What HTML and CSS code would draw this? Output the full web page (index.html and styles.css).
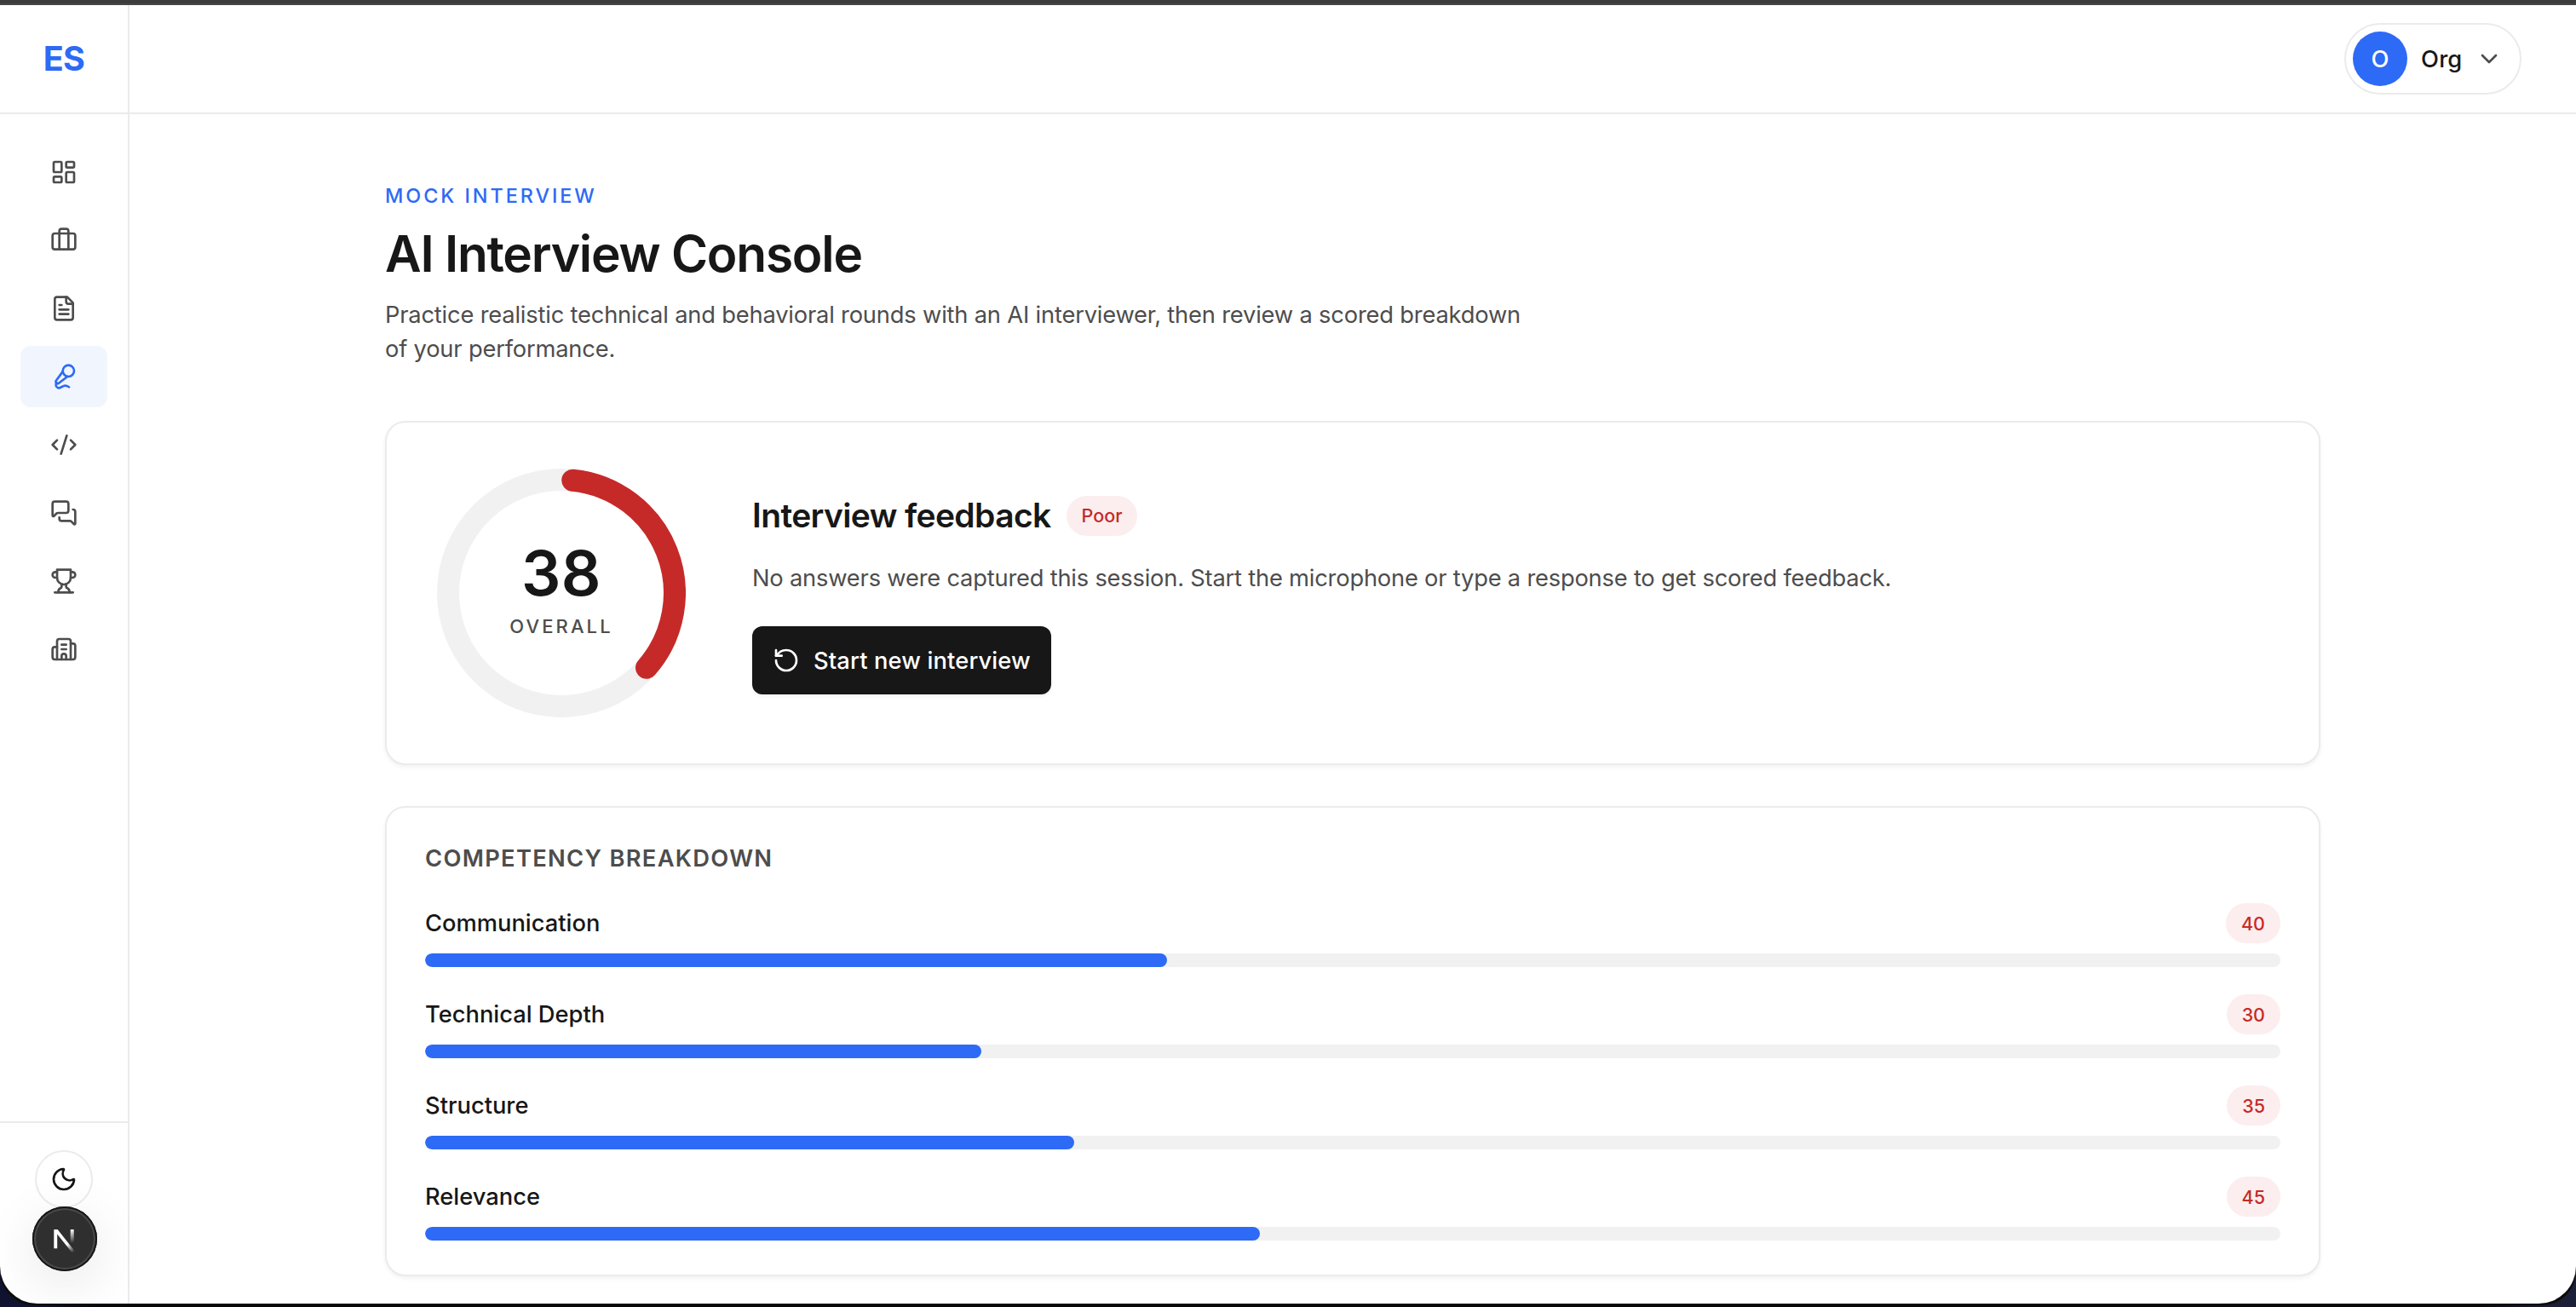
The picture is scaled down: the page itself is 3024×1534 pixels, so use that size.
FILE: index.html
```html
<!DOCTYPE html>
<html lang="en">
<head>
<meta charset="utf-8">
<title>AI Interview Console</title>
<link rel="stylesheet" href="styles.css">
</head>
<body>
<div class="frame">
<div class="app">
  <aside class="sidebar">
    <div class="logo">ES</div>
    <nav class="nav">
      <a class="nav-item"><svg class="icon" viewBox="0 0 24 24"><rect x="3" y="3" width="7" height="9" rx="1"/><rect x="14" y="3" width="7" height="5" rx="1"/><rect x="14" y="12" width="7" height="9" rx="1"/><rect x="3" y="16" width="7" height="5" rx="1"/></svg></a>
      <a class="nav-item"><svg class="icon" viewBox="0 0 24 24"><path d="M16 20V4a2 2 0 0 0-2-2h-4a2 2 0 0 0-2 2v16"/><rect x="2" y="6" width="20" height="14" rx="2"/></svg></a>
      <a class="nav-item"><svg class="icon" viewBox="0 0 24 24"><path d="M15 2H6a2 2 0 0 0-2 2v16a2 2 0 0 0 2 2h12a2 2 0 0 0 2-2V7Z"/><path d="M14 2v4a2 2 0 0 0 2 2h4"/><path d="M10 9H8"/><path d="M16 13H8"/><path d="M16 17H8"/></svg></a>
      <a class="nav-item active"><svg class="icon" viewBox="0 0 24 24"><path d="m11 7.601-5.994 8.19a1 1 0 0 0 .1 1.298l.817.818a1 1 0 0 0 1.314.087L15.09 12"/><path d="M16.5 21.174C15.5 20.5 14.372 20 13 20c-2.058 0-3.928 2.356-6 2-2.072-.356-2.775-3.369-1.5-4.5"/><circle cx="16" cy="7" r="5"/></svg></a>
      <a class="nav-item"><svg class="icon" viewBox="0 0 24 24"><path d="m18 16 4-4-4-4"/><path d="m6 8-4 4 4 4"/><path d="m14.5 4-5 16"/></svg></a>
      <a class="nav-item"><svg class="icon" viewBox="0 0 24 24"><path d="M16 10a2 2 0 0 1-2 2H6.828a2 2 0 0 0-1.414.586l-2.202 2.202A.71.71 0 0 1 2 14.286V4a2 2 0 0 1 2-2h10a2 2 0 0 1 2 2z"/><path d="M20 9a2 2 0 0 1 2 2v10.286a.71.71 0 0 1-1.212.502l-2.202-2.202A2 2 0 0 0 17.172 19H10a2 2 0 0 1-2-2v-1"/></svg></a>
      <a class="nav-item"><svg class="icon" viewBox="0 0 24 24"><path d="M6 9H4.500a2.500 2.500 0 0 1 0-5H6"/><path d="M18 9h1.500a2.500 2.500 0 0 0 0-5H18"/><path d="M4 22h16"/><path d="M10 14.660V17c0 .55-.47.98-.97 1.210C7.850 18.750 7 20.240 7 22"/><path d="M14 14.660V17c0 .55.47.98.97 1.210C16.150 18.750 17 20.240 17 22"/><path d="M18 2H6v7a6 6 0 0 0 12 0V2Z"/></svg></a>
      <a class="nav-item"><svg class="icon" viewBox="0 0 24 24"><path d="M10 12h4"/><path d="M10 8h4"/><path d="M14 21v-3a2 2 0 0 0-4 0v3"/><path d="M6 10H4a2 2 0 0 0-2 2v7a2 2 0 0 0 2 2h16a2 2 0 0 0 2-2V9a2 2 0 0 0-2-2h-2"/><path d="M6 21V5a2 2 0 0 1 2-2h8a2 2 0 0 1 2 2v16"/></svg></a>
    </nav>
    <div class="sidebar-foot">
      <button class="theme"><svg class="icon" viewBox="0 0 24 24"><path d="M20.985 12.486a9 9 0 1 1-9.473-9.472c.405-.022.617.46.402.803a6 6 0 0 0 8.268 8.268c.344-.215.825-.004.803.401"/></svg></button>
    </div>
    <div class="dev-badge">
      <svg viewBox="0 0 40 40">
        <defs>
          <linearGradient id="diag" gradientUnits="userSpaceOnUse" x1="25" y1="26" x2="32" y2="36"><stop stop-color="#fff"/><stop offset="1" stop-color="#fff" stop-opacity="0"/></linearGradient>
          <linearGradient id="stem" x1="0" y1="0" x2="0" y2="1"><stop stop-color="#fff"/><stop offset="1" stop-color="#fff" stop-opacity="0"/></linearGradient>
        </defs>
        <path d="M9.300 31.200V9h4.300L34 34.800 31 36.800 13.200 14.600V31.200Z" fill="url(#diag)"/>
        <rect x="28.700" y="9" width="4" height="16" fill="url(#stem)"/>
      </svg>
    </div>
  </aside>
  <div class="content">
    <header class="topbar">
      <button class="account">
        <span class="avatar">O</span>
        <span class="account-name">Org</span>
        <svg class="icon chevron" viewBox="0 0 24 24"><path d="m6 9 6 6 6-6"/></svg>
      </button>
    </header>
    <main class="main">
      <p class="eyebrow">MOCK INTERVIEW</p>
      <h1 class="title">AI Interview Console</h1>
      <p class="lead">Practice realistic technical and behavioral rounds with an AI interviewer, then review a scored breakdown<br>of your performance.</p>

      <section class="card summary">
        <div class="ring">
          <svg class="ring-svg" viewBox="0 0 292 292">
            <circle class="ring-track" cx="146" cy="146" r="133"/>
            <path class="ring-value" d="M159.200 13.700A133 133 0 0 1 246 233.700"/>
          </svg>
          <div class="ring-label">
            <span class="score">38</span>
            <span class="overall">OVERALL</span>
          </div>
        </div>
        <div class="feedback">
          <div class="feedback-head"><h2 class="feedback-title">Interview feedback</h2><span class="pill">Poor</span></div>
          <p class="feedback-text">No answers were captured this session. Start the microphone or type a response to get scored feedback.</p>
          <button class="restart"><svg class="icon" viewBox="0 0 24 24"><path d="M3 12a9 9 0 1 0 9-9 9.750 9.750 0 0 0-6.740 2.740L3 8"/><path d="M3 3v5h5"/></svg><span>Start new interview</span></button>
        </div>
      </section>

      <section class="card breakdown">
        <h3 class="breakdown-title">COMPETENCY BREAKDOWN</h3>
        <div class="rows">
          <div class="row"><div class="row-head"><span>Communication</span><span class="pill">40</span></div><div class="bar"><div class="fill" style="width:40%"></div></div></div>
          <div class="row"><div class="row-head"><span>Technical Depth</span><span class="pill">30</span></div><div class="bar"><div class="fill" style="width:30%"></div></div></div>
          <div class="row"><div class="row-head"><span>Structure</span><span class="pill">35</span></div><div class="bar"><div class="fill" style="width:35%"></div></div></div>
          <div class="row"><div class="row-head"><span>Relevance</span><span class="pill">45</span></div><div class="bar"><div class="fill" style="width:45%"></div></div></div>
        </div>
      </section>
    </main>
  </div>
</div>
</div>
</body>
</html>
```
FILE: styles.css
```css
* { box-sizing: border-box; }

body {
  margin: 0;
  height: 1534px;
  overflow: hidden;
  background: linear-gradient(90deg, #10132f 0, #10132f 40px, #07060c 110px, #07060c 2910px, #1c1f38 3000px);
  font-family: Inter, "Liberation Sans", sans-serif;
  color: #171717;
}

h1, h2, h3, p { margin: 0; }
button { font: inherit; padding: 0; background: none; border: 0; }

.frame {
  height: 1532px;
  padding-top: 6px;
  background: linear-gradient(#3c3c3c 0, #3c3c3c 4px, #464646 4px, #464646 6px, #0c0c0c 6px);
  border-radius: 0 0 40px 40px;
}

.app {
  display: flex;
  height: 1524px;
  background: #fff;
  border-radius: 0 0 44px 44px;
  overflow: hidden;
}

.icon {
  width: 32px;
  height: 32px;
  flex: none;
  fill: none;
  stroke: currentColor;
  stroke-width: 2;
  stroke-linecap: round;
  stroke-linejoin: round;
}

/* Sidebar */
.sidebar {
  position: relative;
  display: flex;
  flex-direction: column;
  width: 152px;
  flex: none;
  border-right: 2px solid #ebebeb;
}
.logo {
  display: flex;
  align-items: center;
  justify-content: center;
  height: 128px;
  border-bottom: 2px solid #ebebeb;
  color: #2d6af6;
  font-size: 39.5px;
  font-weight: 700;
  letter-spacing: -0.6px;
}
.nav {
  display: flex;
  flex-direction: column;
  gap: 8px;
  flex: 1;
  padding: 32px 24px;
}
.nav-item {
  display: flex;
  align-items: center;
  justify-content: center;
  height: 72px;
  border-radius: 12px;
  color: #4d4d4d;
}
.nav-item.active { background: #f1f6fe; color: #2d6af6; }
.sidebar-foot {
  display: flex;
  justify-content: center;
  height: 214px;
  padding-top: 32px;
  border-top: 2px solid #ebebeb;
}
.theme {
  display: flex;
  align-items: center;
  justify-content: center;
  width: 68px;
  height: 68px;
  border: 2px solid #ebebeb;
  border-radius: 50%;
  color: #171717;
}
.dev-badge {
  position: absolute;
  left: 38px;
  bottom: 38px;
  display: flex;
  align-items: center;
  justify-content: center;
  width: 76px;
  height: 76px;
  border-radius: 50%;
  background: #2f2f2f;
  box-shadow: inset 0 0 0 2px #171717, inset 0 0 0 4px #4a4a4a, 0 16px 64px rgba(0, 0, 0, 0.1);
}
.dev-badge svg { width: 40px; height: 40px; margin-right: 4px; }

/* Top bar */
.content { flex: 1; min-width: 0; }
.topbar {
  display: flex;
  align-items: center;
  justify-content: flex-end;
  height: 128px;
  padding-right: 64px;
  border-bottom: 2px solid #ebebeb;
}
.account {
  display: flex;
  align-items: center;
  width: 208px;
  height: 84px;
  padding-left: 8px;
  border: 2px solid #ebebeb;
  border-radius: 42px;
  font-size: 27.3px;
  font-weight: 500;
  color: #171717;
}
.avatar {
  display: flex;
  align-items: center;
  justify-content: center;
  width: 64px;
  height: 64px;
  border-radius: 50%;
  background: #2d6af6;
  color: #fff;
}
.account-name { margin-left: 16px; letter-spacing: 0.2px; }
.chevron { margin: 0 20px 0 auto; color: #4d4d4d; }

/* Page */
.main { width: 2272px; margin-left: 300px; padding-top: 80px; }
.eyebrow {
  color: #2d6af6;
  font-size: 23.4px;
  font-weight: 500;
  line-height: 32px;
  letter-spacing: 2.95px;
}
.title {
  margin: 16px 0 0;
  font-size: 58.6px;
  font-weight: 600;
  line-height: 72px;
  letter-spacing: -1.24px;
}
.lead {
  margin: 16px 0 64px;
  color: #4d4d4d;
  font-size: 27.3px;
  line-height: 40px;
  letter-spacing: -0.19px;
}

.card {
  border: 2px solid #ebebeb;
  border-radius: 24px;
  background: #fff;
  box-shadow: 0 2px 4px rgba(0, 0, 0, 0.04), 0 4px 8px rgba(0, 0, 0, 0.02);
}

.summary {
  display: flex;
  align-items: center;
  gap: 78px;
  height: 404px;
  padding-left: 59px;
}
.ring { display: grid; width: 292px; height: 292px; }
.ring-svg, .ring-label { grid-area: 1 / 1; }
.ring-track, .ring-value { fill: none; stroke-width: 26; }
.ring-track { stroke: #f1f1f1; }
.ring-value { stroke: #c52a29; stroke-linecap: round; }
.ring-label {
  display: flex;
  flex-direction: column;
  align-items: center;
  padding-top: 87px;
}
.score { font-size: 73px; font-weight: 600; line-height: 72px; letter-spacing: 0.5px; }
.overall {
  margin-top: 14px;
  color: #4d4d4d;
  font-size: 22px;
  font-weight: 500;
  line-height: 24px;
  letter-spacing: 3.1px;
}

.feedback { display: flex; flex-direction: column; align-items: flex-start; }
.feedback-head { display: flex; align-items: center; gap: 18px; }
.feedback-title { font-size: 39px; font-weight: 600; line-height: 56px; letter-spacing: -0.64px; }
.feedback-text {
  margin-top: 24px;
  color: #4d4d4d;
  font-size: 27.3px;
  line-height: 44px;
  letter-spacing: -0.208px;
}
.pill {
  display: flex;
  align-items: center;
  justify-content: center;
  height: 47px;
  padding: 0 18px;
  border-radius: 24px;
  background: #fceeee;
  color: #c52a29;
  font-size: 21.5px;
  font-weight: 500;
}
.restart {
  display: flex;
  align-items: center;
  gap: 16px;
  width: 351px;
  height: 80px;
  margin-top: 34px;
  padding-left: 24px;
  border-radius: 12px;
  background: #171717;
  box-shadow: 0 2px 4px rgba(0, 0, 0, 0.06);
  color: #fff;
  font-size: 27.3px;
  font-weight: 500;
  letter-spacing: 0.14px;
}

.breakdown { height: 552px; margin-top: 48px; padding: 40px 45px 0; }
.breakdown-title {
  color: #4d4d4d;
  font-size: 27.3px;
  font-weight: 600;
  line-height: 40px;
  letter-spacing: 1.3px;
}
.rows { display: flex; flex-direction: column; gap: 32px; margin-top: 32px; }
.row-head {
  display: flex;
  align-items: center;
  justify-content: space-between;
  height: 47px;
  margin-bottom: 12px;
  font-size: 27.3px;
  font-weight: 500;
}
.bar { height: 16px; border-radius: 8px; background: #f1f1f1; overflow: hidden; }
.fill { height: 100%; border-radius: 8px; background: #2d6af6; }
```
